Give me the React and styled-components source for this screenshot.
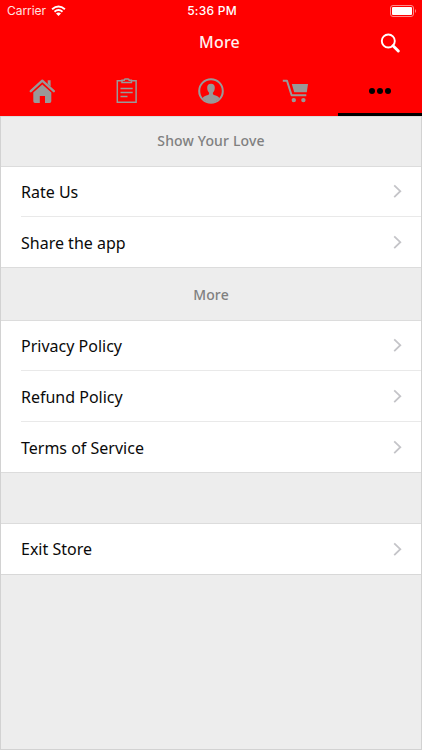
import React from 'react';
import styled, { createGlobalStyle } from 'styled-components';

const GlobalStyle = createGlobalStyle`
  * {
    box-sizing: border-box;
  }

  body {
    margin: 0;
    background: #ededed;
    font-family: 'Noto Sans', 'Open Sans', sans-serif;
  }
`;

const Screen = styled.div`
  display: flex;
  flex-direction: column;
  width: 422px;
  height: 750px;
  overflow: hidden;
`;

const Header = styled.header`
  height: 116px;
  background: #ff0000;
  color: #fff;
`;

const StatusBar = styled.div`
  display: grid;
  grid-template-columns: 1fr auto 1fr;
  align-items: center;
  height: 22px;
  padding: 0 5px 0 7px;
  font-family: Inter, sans-serif;
  font-size: 12px;
  line-height: 22px;
`;

const Carrier = styled.div`
  display: flex;
  align-items: center;
  gap: 5px;
  color: #ffe2e2;
  letter-spacing: -0.05px;
`;

const Clock = styled.div`
  font-weight: 500;
  letter-spacing: 0.25px;
`;

const Battery = styled.svg`
  justify-self: end;
`;

const TitleBar = styled.div`
  display: grid;
  grid-template-columns: 60px 1fr 42px;
  align-items: center;
  height: 42px;
`;

const Title = styled.h1`
  grid-column: 2;
  margin: 0;
  padding: 0 0 3px;
  font-size: 16px;
  font-weight: 500;
  line-height: 22px;
  letter-spacing: 0.2px;
  text-align: center;
  text-indent: -1px;
  color: #fff0f0;
`;

const SearchButton = styled.button`
  display: flex;
  padding: 0;
  border: 0;
  background: none;
`;

const Tabs = styled.nav`
  display: grid;
  grid-template-columns: repeat(5, 1fr);
  height: 52px;
`;

const Tab = styled.button`
  display: flex;
  align-items: center;
  justify-content: center;
  padding: 5px 0 0;
  border: 0;
  border-bottom: 3px solid ${props => props.$active ? '#000' : 'transparent'};
  background: none;
  color: ${props => props.$active ? '#000' : '#999'};
`;

const Content = styled.main`
  flex: 1;
  border: solid #d2d2d2;
  border-width: 0 1px 1px;
  background: #ededed;
`;

const SectionHeader = styled.h2`
  display: flex;
  align-items: center;
  justify-content: center;
  height: ${props => props.$height}px;
  margin: 0;
  padding-bottom: ${props => props.$lift || 0}px;
  border: solid #dcdcdc;
  border-width: 1px 0;
  font-size: 14px;
  font-weight: 500;
  letter-spacing: 0.15px;
  color: #808080;
`;

const List = styled.div`
  background: #fff;
`;

const Row = styled.div`
  display: flex;
  align-items: center;
  justify-content: space-between;
  height: ${props => props.$height}px;
  margin-left: 20px;
  padding-right: 19px;
  border-bottom: ${props => props.$divider ? '1px solid #e9e9e9' : '0'};
  font-size: 16px;
  line-height: 22px;
  color: #0a0a0a;
`;

const RowLabel = styled.span`
  padding-top: ${props => props.$first ? '0' : '2px'};
`;

const Footer = styled.div`
  border-top: 1px solid #d8d8d8;
`;

function WifiIcon() {
  return (
    <svg width="15" height="12" viewBox="0 0 15 12" fill="none" stroke="#fff" strokeWidth="1.9">
      <path d="M1.1 4.2Q7.5-1.3 13.9 4.2" />
      <path d="M3.5 6.7Q7.5 3.3 11.5 6.7" />
      <path d="M5 8.5Q7.5 6.7 10 8.5L7.5 11Z" fill="#fff" stroke="none" />
    </svg>
  );
}

function BatteryIcon() {
  return (
    <Battery width="27" height="12" viewBox="0 0 27 12">
      <rect x="0.5" y="0.5" width="23" height="11" rx="2.5" fill="none" stroke="#ff8c8c" />
      <rect x="2" y="2" width="20" height="8" rx="1" fill="#fff" />
      <path d="M25 4q2 2 0 4z" fill="#ff8c8c" />
    </Battery>
  );
}

function SearchIcon() {
  return (
    <svg width="21" height="21" viewBox="0 0 21 21" fill="none" stroke="#fff" strokeLinecap="round">
      <circle cx="8.3" cy="8" r="6.5" strokeWidth="1.9" />
      <path d="M13 12.8L18.3 18" strokeWidth="3" />
    </svg>
  );
}

function HomeIcon() {
  return (
    <svg width="26" height="26" viewBox="0 0 26 26" fill="none">
      <path d="M1.8 13.2L13.3 2.7l11.5 10.5" stroke="currentColor" strokeWidth="2.3" strokeLinecap="round" strokeLinejoin="round" />
      <path d="M18.7 2.3h2.9v6.2l-2.9-2.6z" fill="currentColor" />
      <path d="M13.3 6.5l9 8.1v8.7q0 1.7-1.7 1.7H16v-7h-5.2v7H6q-1.7 0-1.7-1.7v-8.7z" fill="currentColor" />
    </svg>
  );
}

function OrdersIcon() {
  return (
    <svg width="22" height="26" viewBox="0 0 22 26" fill="none" stroke="currentColor" strokeWidth="1.5">
      <path d="M6 2.7H1.3v21.5h18.8V2.7h-4.7" />
      <path d="M6 4.6V2.2h2.2q.1-1.3 1.1-1.3h2.8q1 0 1.1 1.3h2.2v2.4z" />
      <path d="M4.5 10.5h12.2M4.5 14.5h12.2M4.5 18.5h7" />
    </svg>
  );
}

function ProfileIcon() {
  return (
    <svg width="26" height="26" viewBox="0 0 26 26">
      <circle cx="13" cy="13" r="11.8" fill="none" stroke="currentColor" strokeWidth="2" />
      <path
        d="M13 5.8c2.5 0 3.8 1.6 3.8 4 0 2.3-.8 3.8-1.9 4.9v1.4c0 1.1 5.5 1.6 6.4 4.2C19.4 22.8 16.5 24.5 13 24.5s-6.4-1.7-8.3-4.2c.9-2.6 6.4-3.1 6.4-4.2v-1.4c-1.1-1.1-1.9-2.6-1.9-4.9 0-2.4 1.3-4 3.8-4z"
        fill="currentColor"
      />
    </svg>
  );
}

function CartIcon() {
  return (
    <svg width="26" height="26" viewBox="0 0 26 26">
      <path d="M.8 2.7h4.2l4.6 14.6h14.7" fill="none" stroke="currentColor" strokeWidth="2" strokeLinejoin="round" />
      <path d="M9.8 6H26l-1.2 8.3H12.2z" fill="currentColor" />
      <circle cx="11.8" cy="22.1" r="2.2" fill="currentColor" />
      <circle cx="21.4" cy="22.1" r="2.2" fill="currentColor" />
    </svg>
  );
}

function MoreIcon() {
  return (
    <svg width="22" height="8" viewBox="0 0 22 8" fill="currentColor">
      <circle cx="3" cy="4" r="3" />
      <circle cx="11" cy="4" r="3" />
      <circle cx="19" cy="4" r="3" />
    </svg>
  );
}

function Chevron() {
  return (
    <svg width="9" height="15" viewBox="0 0 9 15" fill="none" stroke="#c4c4c8" strokeWidth="1.8">
      <path d="M1.2 1.3L7.3 7.2L1.2 13.1" />
    </svg>
  );
}

const tabs = [
  { id: 'home', label: 'Home', icon: HomeIcon },
  { id: 'orders', label: 'Orders', icon: OrdersIcon },
  { id: 'profile', label: 'Profile', icon: ProfileIcon },
  { id: 'cart', label: 'Cart', icon: CartIcon },
  { id: 'more', label: 'More', icon: MoreIcon }
];

const sections = [
  {
    id: 'love',
    title: 'Show Your Love',
    height: 51,
    lift: 2,
    rows: [
      { label: 'Rate Us', height: 50 },
      { label: 'Share the app', height: 50 }
    ]
  },
  {
    id: 'more',
    title: 'More',
    height: 54,
    rows: [
      { label: 'Privacy Policy', height: 50 },
      { label: 'Refund Policy', height: 51 },
      { label: 'Terms of Service', height: 50 }
    ]
  },
  {
    id: 'exit',
    title: '',
    height: 52,
    rows: [{ label: 'Exit Store', height: 50 }]
  }
];

function App() {
  return (
    <>
      <GlobalStyle />
      <Screen>
        <Header>
          <StatusBar>
            <Carrier>
              Carrier
              <WifiIcon />
            </Carrier>
            <Clock>5:36 PM</Clock>
            <BatteryIcon />
          </StatusBar>
          <TitleBar>
            <Title>More</Title>
            <SearchButton aria-label="Search">
              <SearchIcon />
            </SearchButton>
          </TitleBar>
          <Tabs>
            {tabs.map((tab) => {
              const Icon = tab.icon;
              return (
                <Tab key={tab.id} aria-label={tab.label} $active={tab.id === 'more'}>
                  <Icon />
                </Tab>
              );
            })}
          </Tabs>
        </Header>
        <Content>
          {sections.map((section) => (
            <React.Fragment key={section.id}>
              <SectionHeader $height={section.height} $lift={section.lift}>{section.title}</SectionHeader>
              <List>
                {section.rows.map((row, index) => (
                  <Row key={row.label} $height={row.height} $divider={index < section.rows.length - 1}>
                    <RowLabel $first={index === 0}>{row.label}</RowLabel>
                    <Chevron />
                  </Row>
                ))}
              </List>
            </React.Fragment>
          ))}
          <Footer />
        </Content>
      </Screen>
    </>
  );
}

export default App;
